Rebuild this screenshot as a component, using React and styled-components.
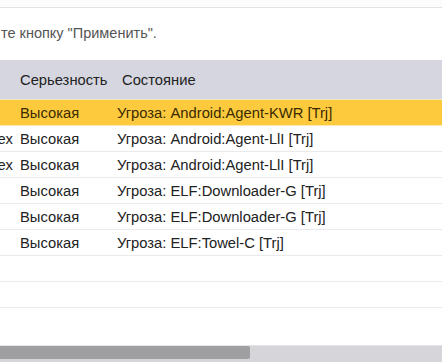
import React from "react";
import styled, { createGlobalStyle } from "styled-components";

const GlobalStyle = createGlobalStyle`
  html, body {
    margin: 0;
    padding: 0;
    background: #fff;
  }
  body {
    font-family: "Liberation Sans", Arial, sans-serif;
    color: #222;
  }
`;

const Page = styled.div`
  width: 442px;
  height: 362px;
  display: flex;
  flex-direction: column;
  overflow: hidden;
  background: #fff;
`;

const TopRule = styled.div`
  height: 7px;
  border-bottom: 1px solid #e2e2e6;
  background: #fcfcfd;
`;

const Hint = styled.div`
  height: 52px;
  display: flex;
  align-items: center;
  padding: 0 0 2px 1px;
  box-sizing: border-box;
  font-size: 14.5px;
  color: #555;
  white-space: nowrap;
`;

const Grid = styled.div`
  flex: 1;
  display: flex;
  flex-direction: column;
`;

const HeaderRow = styled.div`
  height: 39px;
  display: grid;
  grid-template-columns: 16px 97px 1fr;
  align-items: center;
  background: #d6d6e1;
  border-bottom: 1px solid #efe7c0;
  font-size: 14.75px;
  color: #222;
`;

const HeadCell = styled.div`
  padding-left: ${(p) => p.$pad || 4}px;
  white-space: nowrap;
`;

const Row = styled.div`
  height: 25px;
  display: grid;
  grid-template-columns: 16px 97px 1fr;
  align-items: center;
  font-size: 14.75px;
  color: ${(p) => (p.$selected ? "#3a2a00" : "#222")};
  background: ${(p) => (p.$selected ? "#fdca3e" : "#fff")};
  border-bottom: 1px solid ${(p) => (p.$selected ? "#fbe7b0" : "#e9e9ee")};
`;

const ClipCell = styled.div`
  display: flex;
  justify-content: flex-end;
  overflow: hidden;
  white-space: nowrap;
  padding-right: 3px;
`;

const Cell = styled.div`
  padding-left: 4px;
  white-space: nowrap;
`;

const Filler = styled.div`
  flex: 1;
`;

const Scrollbar = styled.div`
  height: 17px;
  background: #d5d5da;
  border-top: 1px solid #e4e4e8;
  box-sizing: border-box;
  display: flex;
  align-items: flex-start;
`;

const Thumb = styled.div`
  height: 13px;
  background: #9f9fa2;
  border-radius: 0 2px 2px 0;
`;

const rows = [
  { sev: "Высокая", state: "Угроза: Android:Agent-KWR [Trj]", selected: true, clip: "" },
  { sev: "Высокая", state: "Угроза: Android:Agent-LlI [Trj]", clip: "ex" },
  { sev: "Высокая", state: "Угроза: Android:Agent-LlI [Trj]", clip: "ex" },
  { sev: "Высокая", state: "Угроза: ELF:Downloader-G [Trj]", clip: "" },
  { sev: "Высокая", state: "Угроза: ELF:Downloader-G [Trj]", clip: "" },
  { sev: "Высокая", state: "Угроза: ELF:Towel-C [Trj]", clip: "" },
  { sev: "", state: "", clip: "" },
  { sev: "", state: "", clip: "" },
];

export default function App() {
  return (
    <Page>
      <GlobalStyle />
      <TopRule />
      <Hint>те кнопку "Применить".</Hint>
      <Grid>
        <HeaderRow>
          <HeadCell />
          <HeadCell>Серьезность</HeadCell>
          <HeadCell $pad={9}>Состояние</HeadCell>
        </HeaderRow>
        {rows.map((r, i) => (
          <Row key={i} $selected={r.selected}>
            <ClipCell>{r.clip}</ClipCell>
            <Cell>{r.sev}</Cell>
            <Cell>{r.state}</Cell>
          </Row>
        ))}
        <Filler />
      </Grid>
      <Scrollbar>
        <Thumb style={{ width: 250 }} />
      </Scrollbar>
    </Page>
  );
}
